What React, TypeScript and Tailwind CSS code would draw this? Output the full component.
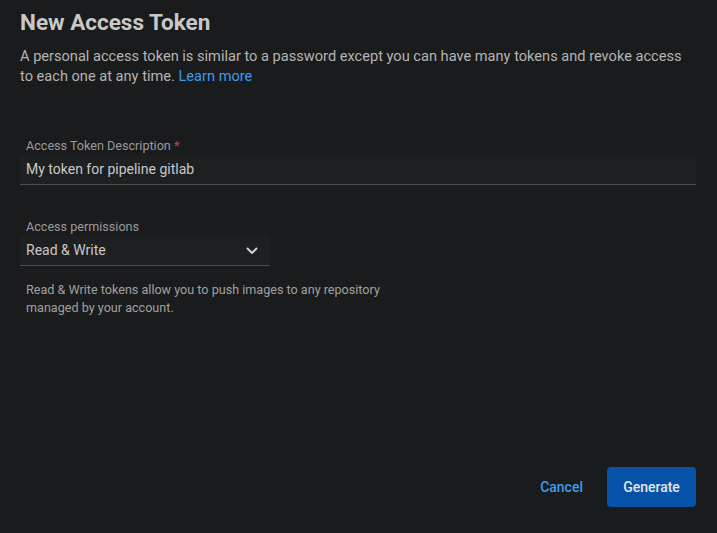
export default function App() {
  return (
    <div
      className="flex h-[533px] w-[717px] flex-col bg-[#1a1b1d] pl-5 pr-[21px] pb-[26px] text-[#b4b4b4]"
      style={{ fontFamily: "Roboto, 'Liberation Sans', sans-serif" }}
    >
      <h1 className="mt-[8px] text-[22.5px] font-bold leading-[28px] text-[#c8c8c8]">New Access Token</h1>
      <p className="mt-[10px] text-[14.6px] leading-[20px] text-[#b4b4b4]">
        A personal access token is similar to a password except you can have many tokens and revoke access
        <br />
        to each one at any time. <span className="text-[#3d9be9]">Learn more</span>
      </p>

      <div className="mt-[52px] flex flex-col">
        <label className="px-[6px] text-[12.6px] leading-[16px] text-[#9a9a9a]">
          Access Token Description <span className="text-[#e0344a]">*</span>
        </label>
        <div className="mt-[1px] flex h-[30px] items-center border-b border-[#4a4b4e] bg-[#1e1f21] px-[6px] text-[14px] text-[#c8c8c8]">
          My token for pipeline gitlab
        </div>
      </div>

      <div className="mt-[34px] flex flex-col">
        <label className="px-[6px] text-[12.6px] leading-[16px] text-[#9a9a9a]">Access permissions</label>
        <div className="mt-[1px] flex h-[30px] w-[250px] items-center justify-between border-b border-[#4a4b4e] bg-[#1e1f21] pl-[6px] pr-[12px] text-[14px] text-[#c8c8c8]">
          <span>Read & Write</span>
          <svg width="12" height="8" viewBox="0 0 12 8" fill="none">
            <path d="M1.5 1.5 L6 6 L10.5 1.5" stroke="#d0d0d0" strokeWidth="2" strokeLinecap="round" strokeLinejoin="round" />
          </svg>
        </div>
      </div>

      <p className="mt-[15px] px-[6px] text-[12.6px] leading-[18px] text-[#a0a0a0]">
        Read & Write tokens allow you to push images to any repository
        <br />
        managed by your account.
      </p>

      <div className="mt-auto flex items-center justify-end gap-[24px]">
        <button className="text-[14px] font-medium text-[#3d9be9]">Cancel</button>
        <button className="h-[40px] w-[89px] rounded-[4px] bg-[#0552a8] text-[14px] font-medium text-[#e6e6e6]">
          Generate
        </button>
      </div>
    </div>
  );
}
